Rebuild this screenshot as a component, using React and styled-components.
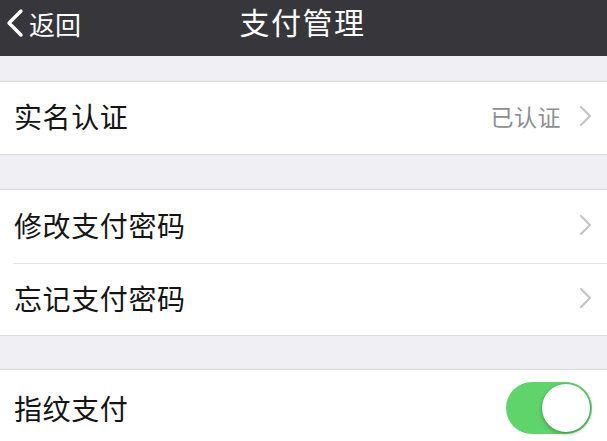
import React, { useState } from 'react';
import styled, { createGlobalStyle } from 'styled-components';

const GlobalStyle = createGlobalStyle`
  html, body {
    margin: 0;
    padding: 0;
    background-color: #efeff4;
    overflow: hidden;
  }
  body {
    font-family: "Noto Sans CJK SC", "Noto Sans", sans-serif;
  }
`;

const Page = styled.div`
  display: flex;
  flex-direction: column;
  width: 607px;
  min-height: 441px;
  background-color: #efeff4;
`;

const NavBar = styled.header`
  position: relative;
  display: flex;
  align-items: center;
  justify-content: center;
  height: 56px;
  background-color: #36363b;
  color: #fff;
`;

const BackButton = styled.div`
  position: absolute;
  left: 5px;
  top: 0;
  bottom: 10px;
  display: flex;
  align-items: center;
  gap: 4px;
  font-size: 26px;
  color: #fff;
`;

const Title = styled.div`
  font-size: 30px;
  margin-bottom: 14px;
  margin-right: 2px;
  letter-spacing: 1.5px;
`;

const Group = styled.section`
  display: flex;
  flex-direction: column;
  margin-top: ${p => p.gap}px;
  background-color: #fff;
  border-top: 1px solid #dcdce0;
  border-bottom: 1px solid #dcdce0;
`;

const Row = styled.div`
  display: flex;
  align-items: center;
  height: ${p => p.h || 72}px;
  padding: 0 15px 4px 14px;
  box-sizing: border-box;
  border-top: ${p => (p.divided ? '1px solid #e2e2e6' : 'none')};
  margin-left: ${p => (p.divided ? '13px' : '0')};
  padding-left: ${p => (p.divided ? '1px' : '14px')};
`;

const Label = styled.div`
  flex: 1;
  font-size: 28px;
  color: #141414;
  letter-spacing: 0.6px;
`;

const Detail = styled.div`
  font-size: 23px;
  color: #8e8e93;
  margin-right: 18px;
  letter-spacing: 0.5px;
`;

const Toggle = styled.div`
  position: relative;
  width: 86px;
  height: 52px;
  border-radius: 26px;
  background-color: ${p => (p.on ? '#5fd46b' : '#e5e5ea')};
`;

const Knob = styled.div`
  position: absolute;
  top: 2px;
  left: ${p => (p.on ? '36px' : '2px')};
  width: 48px;
  height: 48px;
  border-radius: 50%;
  background-color: #fff;
  box-shadow: 0 2px 4px rgba(0, 0, 0, 0.25), 0 0 0 1px rgba(0, 0, 0, 0.06);
`;

function Chevron({ color = '#c4c4c8' }) {
  return (
    <svg width="13" height="22" viewBox="0 0 13 22" fill="none">
      <path d="M2 2 L11 11 L2 20" stroke={color} strokeWidth="2.2" strokeLinecap="round" strokeLinejoin="round" />
    </svg>
  );
}

function BackChevron() {
  return (
    <svg width="20" height="30" viewBox="0 0 20 30" fill="none">
      <path d="M16 3 L4 15 L16 27" stroke="#fff" strokeWidth="3.4" strokeLinecap="round" strokeLinejoin="round" />
    </svg>
  );
}

function App() {
  const [fingerprint, setFingerprint] = useState(true);

  return (
    <Page>
      <GlobalStyle />
      <NavBar>
        <BackButton>
          <BackChevron />
          返回
        </BackButton>
        <Title>支付管理</Title>
      </NavBar>

      <Group gap={25}>
        <Row>
          <Label>实名认证</Label>
          <Detail>已认证</Detail>
          <Chevron />
        </Row>
      </Group>

      <Group gap={34}>
        <Row h={73}>
          <Label>修改支付密码</Label>
          <Chevron />
        </Row>
        <Row divided>
          <Label>忘记支付密码</Label>
          <Chevron />
        </Row>
      </Group>

      <Group gap={33}>
        <Row h={80}>
          <Label>指纹支付</Label>
          <Toggle on={fingerprint} onClick={() => setFingerprint(!fingerprint)}>
            <Knob on={fingerprint} />
          </Toggle>
        </Row>
      </Group>
    </Page>
  );
}

export default App;
